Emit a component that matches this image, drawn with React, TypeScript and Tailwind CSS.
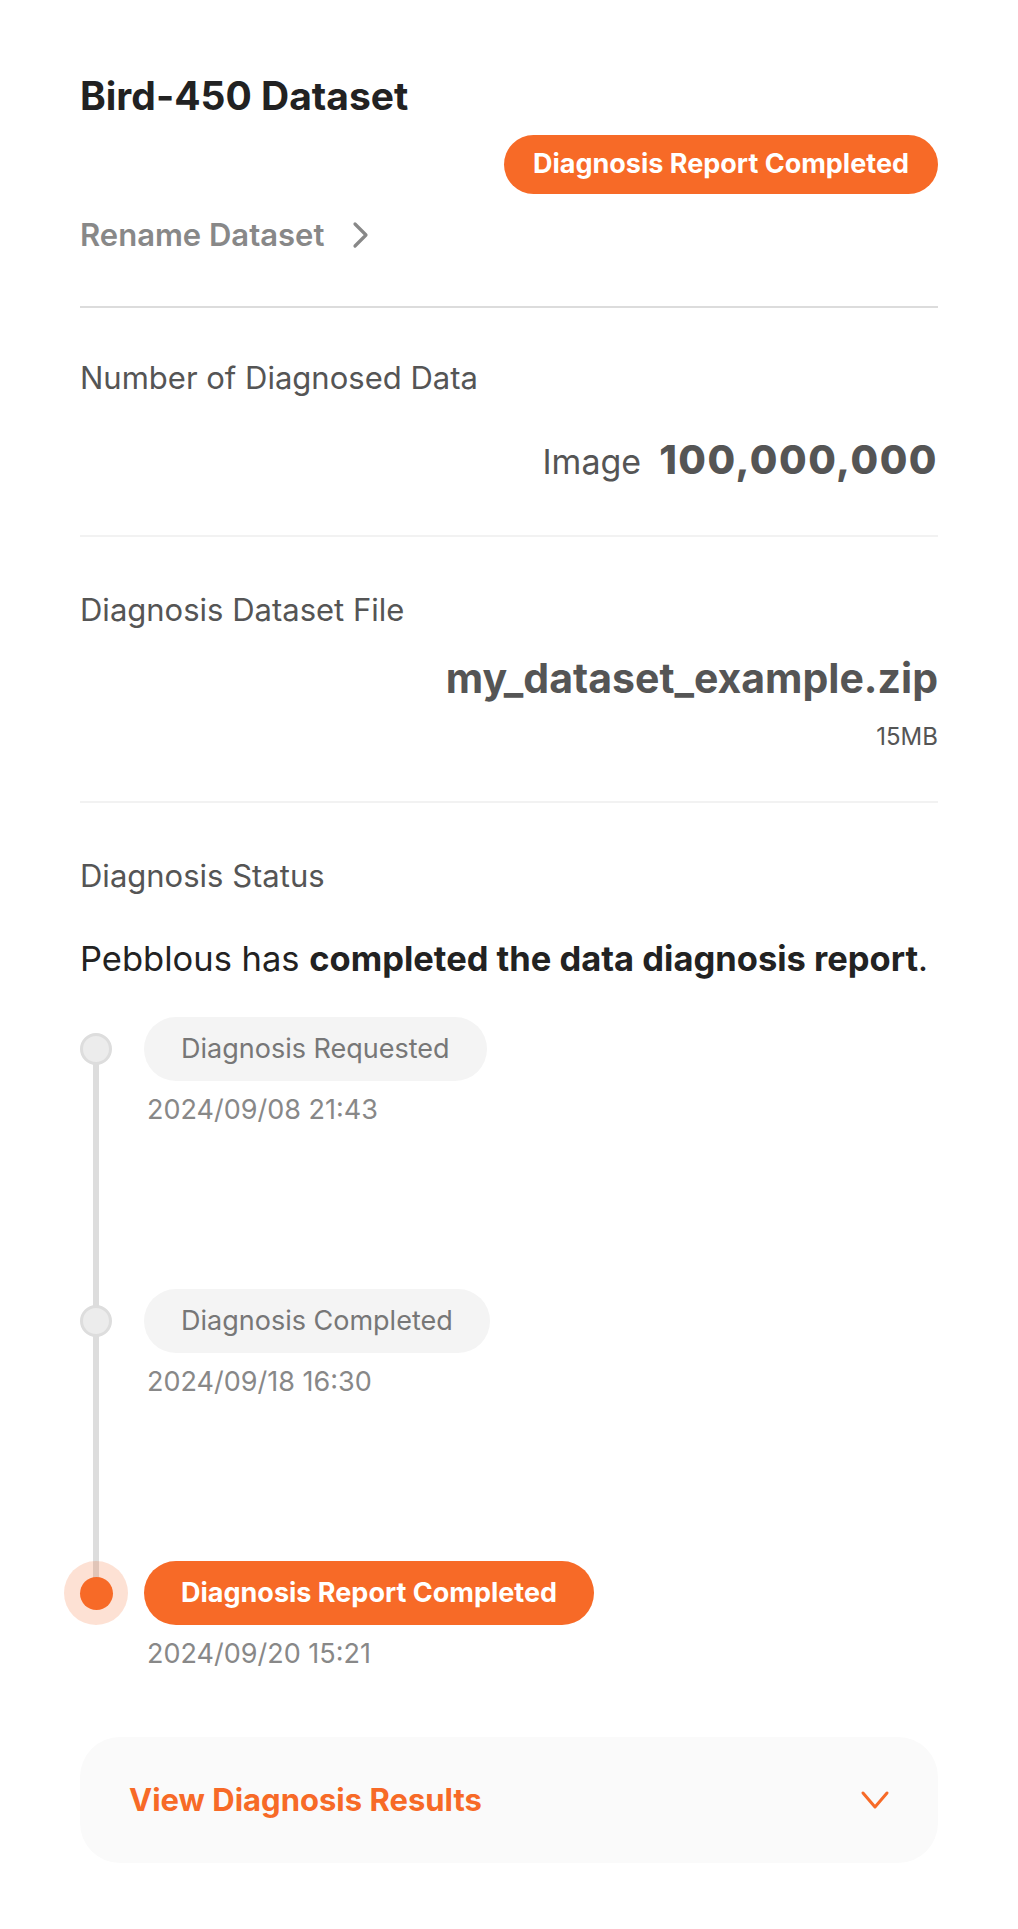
import React from 'react';

interface Step {
    label: string;
    date: string;
    active?: boolean;
}

const steps: Step[] = [
    { label: 'Diagnosis Requested', date: '2024/09/08 21:43' },
    { label: 'Diagnosis Completed', date: '2024/09/18 16:30' },
    { label: 'Diagnosis Report Completed', date: '2024/09/20 15:21', active: true },
];

const ChevronRight = () => (
    <svg width="22" height="32" viewBox="0 0 22 32" fill="none">
        <path d="M5 5 L16 16 L5 27" stroke="#888888" strokeWidth="3.2" strokeLinecap="round" strokeLinejoin="round" />
    </svg>
);

const ChevronDown = () => (
    <svg width="30" height="22" viewBox="0 0 30 22" fill="none">
        <path d="M3 4 L15 18 L27 4" stroke="#f76a27" strokeWidth="3" strokeLinecap="round" strokeLinejoin="round" />
    </svg>
);

const StatusTimeline: React.FC = () => (
    <div className="relative mt-[38px]">
        {/* connecting line, from first dot to last */}
        <div className="absolute left-[13px] top-[32px] bottom-[85px] w-[6px] bg-[#dddddd]" />
        <div className="flex flex-col gap-[163px]">
            {steps.map(step => (
                <div key={step.label} className="flex items-start">
                    <div className="relative w-[64px] h-[64px] flex items-center justify-center -ml-[16px]">
                        {step.active ? (
                            <>
                                <div className="absolute inset-0 rounded-full bg-[#f76a27]/20" />
                                <div className="relative w-[33px] h-[33px] rounded-full bg-[#f76a27]" />
                            </>
                        ) : (
                            <div className="relative w-[32px] h-[32px] rounded-full bg-[#ececec] border-[3px] border-[#dddddd]" />
                        )}
                    </div>
                    <div className="ml-[16px] flex flex-col items-start">
                        <div
                            className={
                                step.active
                                    ? 'h-[64px] px-[37px] rounded-full bg-[#f76a27] text-white font-bold text-[27px] flex items-center'
                                    : 'h-[64px] px-[37px] rounded-full bg-[#f4f4f4] text-[#777777] text-[27px] flex items-center'
                            }
                        >
                            {step.label}
                        </div>
                        <p className="mt-[13px] ml-[3px] text-[27px] leading-[32px] text-[#888888]">{step.date}</p>
                    </div>
                </div>
            ))}
        </div>
    </div>
);

export default function App() {
    return (
        <div className="min-h-[1929px] bg-white px-[80px] pt-[73px] pb-[63px]" style={{ fontFamily: 'Inter, "Noto Sans", sans-serif' }}>
            <h1 className="text-[39px] leading-[46px] font-bold text-[#222222]">Bird-450 Dataset</h1>

            <div className="flex justify-end mt-[16px]">
                <span className="h-[59px] px-[29px] rounded-full bg-[#f76a27] text-white font-bold text-[27px] flex items-center">
                    Diagnosis Report Completed
                </span>
            </div>

            <button className="mt-[24px] flex items-center gap-[26px] text-[31px] leading-[34px] font-semibold text-[#888888]">
                Rename Dataset
                <ChevronRight />
            </button>

            <div className="mt-[54px] h-[2px] bg-[#dcdcdc]" />

            <section className="pt-[53px] pb-[50px] border-b-2 border-[#f2f2f2]">
                <p className="text-[31px] leading-[34px] text-[#555555]">Number of Diagnosed Data</p>
                <div className="mt-[42px] flex justify-end items-baseline gap-[18px] text-[#555555]">
                    <span className="text-[34px] leading-[46px]">Image</span>
                    <span className="text-[40px] leading-[46px] font-extrabold tracking-[1.5px]">100,000,000</span>
                </div>
            </section>

            <section className="pt-[56px] pb-[49px] border-b-2 border-[#f2f2f2]">
                <p className="text-[31px] leading-[34px] text-[#555555]">Diagnosis Dataset File</p>
                <div className="mt-[28px] flex flex-col items-end text-[#555555]">
                    <span className="text-[41px] leading-[46px] font-bold">my_dataset_example.zip</span>
                    <span className="mt-[21px] text-[24px] leading-[30px]">15MB</span>
                </div>
            </section>

            <section className="pt-[56px]">
                <p className="text-[31px] leading-[34px] text-[#555555]">Diagnosis Status</p>
                <p className="mt-[46px] text-[34.5px] leading-[40px] text-[#222222]">
                    Pebblous has <span className="font-bold">completed the data diagnosis report</span>.
                </p>
                <StatusTimeline />
            </section>

            <button className="mt-[67px] w-full h-[126px] rounded-[40px] bg-[#fafafa] pl-[49px] pr-[48px] flex items-center justify-between">
                <span className="text-[31px] font-bold text-[#f76a27]">View Diagnosis Results</span>
                <ChevronDown />
            </button>
        </div>
    );
}
